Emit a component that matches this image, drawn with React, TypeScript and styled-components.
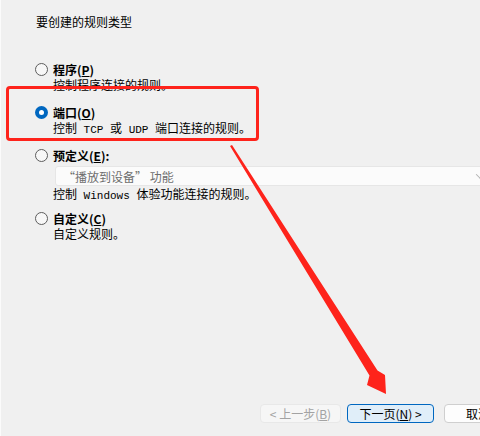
import React, { FC, ReactNode } from 'react';
import styled, { createGlobalStyle } from 'styled-components';

const GlobalStyle = createGlobalStyle`
  html, body {
    margin: 0;
    padding: 0;
    background: #f0f0f0;
  }
`;

const Page = styled.div`
  position: relative;
  width: 480px;
  height: 436px;
  overflow: hidden;
  box-sizing: border-box;
  display: flex;
  flex-direction: column;
  padding-top: 14px;
  background: #f0f0f0;
  border-left: 1px solid #fbfbfb;
  font-family: 'Noto Sans CJK SC', 'Liberation Sans', sans-serif;
  font-size: 12px;
  color: #000;
`;

const Title = styled.div`
  padding-left: 35px;
  line-height: 16px;
`;

const OptionList = styled.div`
  display: flex;
  flex-direction: column;
  margin-top: 22px;
  padding-left: 34px;
`;

const Option = styled.div<{ spaceBefore: number }>`
  display: flex;
  flex-direction: column;
  margin-top: ${({ spaceBefore }) => spaceBefore}px;
`;

const LabelRow = styled.label`
  display: flex;
  align-items: center;
  gap: 5px;
  height: 16px;
  font-weight: 700;
`;

const Radio = styled.span<{ checked?: boolean }>`
  box-sizing: border-box;
  width: 13px;
  height: 13px;
  border-radius: 50%;
  display: flex;
  align-items: center;
  justify-content: center;
  border: ${({ checked }) => (checked ? 'none' : '1px solid #5d5d5d')};
  background: ${({ checked }) => (checked ? '#0067c0' : '#f7f7f7')};

  &::after {
    content: '';
    display: ${({ checked }) => (checked ? 'block' : 'none')};
    width: 5px;
    height: 5px;
    border-radius: 50%;
    background: #fff;
  }
`;

const Desc = styled.div`
  padding-left: 18px;
  line-height: 16px;
`;

const Mono = styled.span`
  font-family: 'Liberation Mono', monospace;
  font-size: 11px;
  white-space: pre;
`;

const Select = styled.div`
  box-sizing: border-box;
  margin: 3px 0 0 20px;
  width: 435px;
  height: 20px;
  display: flex;
  align-items: center;
  justify-content: space-between;
  padding: 0 6px 0 7px;
  background: #fbfbfb;
  border: 1px solid #e6e6e6;
  border-radius: 3px;
  color: #6e6e6e;
`;

const Chevron = styled.span`
  width: 5px;
  height: 5px;
  border-right: 1px solid #b0b0b0;
  border-bottom: 1px solid #b0b0b0;
  transform: rotate(45deg) translate(-1px, -1px);
`;

const ButtonRow = styled.div`
  display: flex;
  margin-top: auto;
  padding: 0 0 13px 259px;
  gap: 6px;
`;

const Button = styled.button<{ variant?: 'primary' | 'disabled' | 'normal'; w: number }>`
  flex: none;
  box-sizing: border-box;
  width: ${({ w }) => w}px;
  height: 19px;
  padding: 0;
  border-radius: 4px;
  font-family: 'Noto Sans CJK SC', 'Liberation Sans', sans-serif;
  font-size: 12px;
  line-height: 17px;
  border: 1px solid
    ${({ variant }) =>
      variant === 'primary' ? '#0067c0' : variant === 'disabled' ? '#e8e8e8' : '#cfcfcf'};
  background: ${({ variant }) =>
    variant === 'primary' ? '#e0eef9' : variant === 'disabled' ? '#f6f6f6' : '#fdfdfd'};
  color: ${({ variant }) => (variant === 'disabled' ? '#a3a3a3' : '#000')};
`;

const CancelButton = styled(Button)`
  margin-left: 4px;
  text-align: left;
  padding-left: 21px;
`;

const Highlight = styled.div`
  position: absolute;
  left: 5px;
  top: 86px;
  width: 253px;
  height: 55px;
  box-sizing: border-box;
  border: 3px solid #fe231b;
  border-radius: 4px;
  pointer-events: none;
`;

const Overlay = styled.svg`
  position: absolute;
  left: 0;
  top: 0;
  pointer-events: none;
`;

interface IRuleOptionProps {
  label: ReactNode;
  checked?: boolean;
  spaceBefore: number;
  children?: ReactNode;
}

const RuleOption: FC<IRuleOptionProps> = ({ label, checked, spaceBefore, children }) => (
  <Option spaceBefore={spaceBefore}>
    <LabelRow>
      <Radio checked={checked} />
      <span>{label}</span>
    </LabelRow>
    {children}
  </Option>
);

const App: FC = () => (
  <>
    <GlobalStyle />
    <Page>
      <Title>要创建的规则类型</Title>
      <OptionList>
        <RuleOption spaceBefore={9} label={<>程序(<u>P</u>)</>}>
          <Desc>控制程序连接的规则。</Desc>
        </RuleOption>
        <RuleOption spaceBefore={11} checked label={<>端口(<u>O</u>)</>}>
          <Desc>
            控制<Mono> TCP </Mono>或<Mono> UDP </Mono>端口连接的规则。
          </Desc>
        </RuleOption>
        <RuleOption spaceBefore={9} label={<>预定义(<u>E</u>):</>}>
          <Select>
            <span>“播放到设备” 功能</span>
            <Chevron />
          </Select>
          <Desc>
            控制<Mono> Windows </Mono>体验功能连接的规则。
          </Desc>
        </RuleOption>
        <RuleOption spaceBefore={6} label={<>自定义(<u>C</u>)</>}>
          <Desc>自定义规则。</Desc>
        </RuleOption>
      </OptionList>
      <ButtonRow>
        <Button variant="disabled" w={81}>
          &lt; 上一步(<u>B</u>)
        </Button>
        <Button variant="primary" w={87}>
          下一页(<u>N</u>) &gt;
        </Button>
        <CancelButton variant="normal" w={80}>
          取消
        </CancelButton>
      </ButtonRow>
      <Highlight />
      <Overlay width="480" height="436" viewBox="0 0 480 436">
        <polygon
          points="229,146 231,145 376.5,370.5 384,375 385,394 366,385 368.5,375.5"
          fill="#fe231b"
        />
      </Overlay>
    </Page>
  </>
);

export default App;
